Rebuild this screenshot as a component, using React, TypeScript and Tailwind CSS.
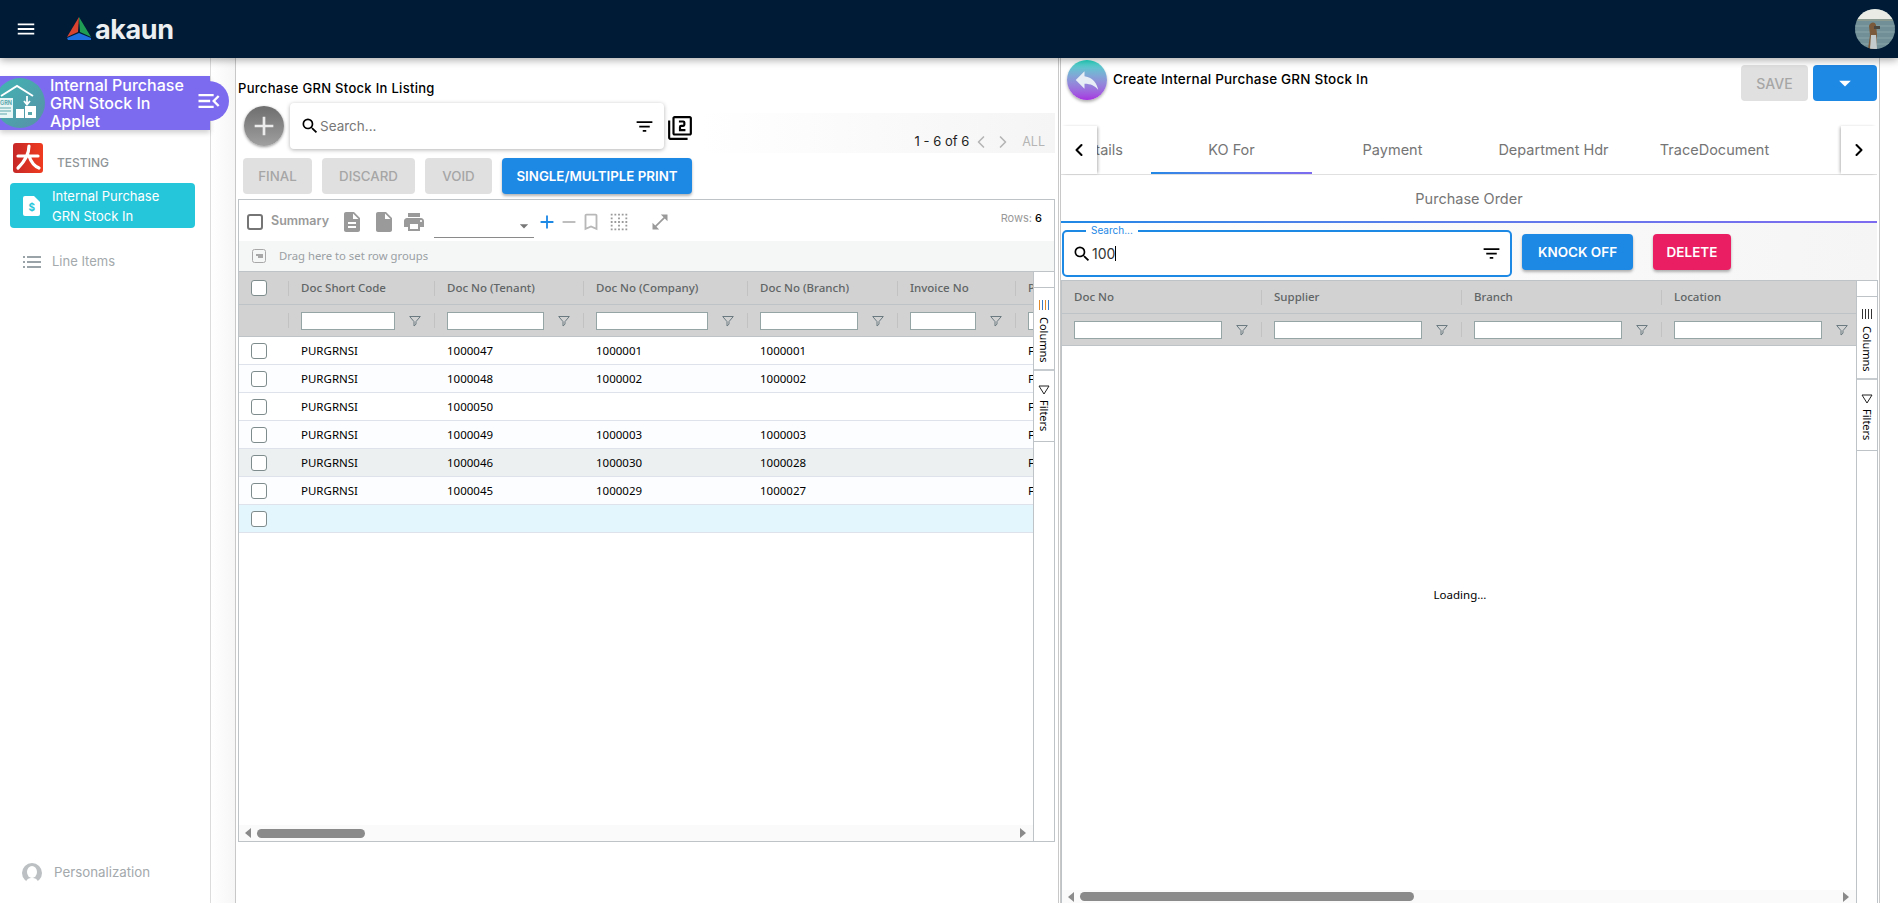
import {
  MdAdd,
  MdArrowDropDown,
  MdBookmarkBorder,
  MdBorderClear,
  MdDescription,
  MdFilter2,
  MdFilterList,
  MdInsertDriveFile,
  MdMenu,
  MdMenuOpen,
  MdOpenInFull,
  MdPrint,
  MdRemove,
  MdReply,
  MdSearch,
} from "react-icons/md";
import { ChevronLeft, ChevronRight } from "lucide-react";

type Column = { title: string; cell: string };

const leftColumns: Column[] = [
  { title: "Doc Short Code", cell: "w-[146px]" },
  { title: "Doc No (Tenant)", cell: "w-[149px]" },
  { title: "Doc No (Company)", cell: "w-[164px]" },
  { title: "Doc No (Branch)", cell: "w-[150px]" },
  { title: "Invoice No", cell: "w-[118px]" },
  { title: "Posting Status", cell: "w-[150px]" },
];

const rightColumns: Column[] = [
  { title: "Doc No", cell: "w-[200px]" },
  { title: "Supplier", cell: "w-[200px]" },
  { title: "Branch", cell: "w-[200px]" },
  { title: "Location", cell: "w-[200px]" },
];

const rows = [
  { values: ["PURGRNSI", "1000047", "1000001", "1000001", "", "FINAL"], bg: "bg-white" },
  { values: ["PURGRNSI", "1000048", "1000002", "1000002", "", "FINAL"], bg: "bg-[#fcfdfe]" },
  { values: ["PURGRNSI", "1000050", "", "", "", "FINAL"], bg: "bg-white" },
  { values: ["PURGRNSI", "1000049", "1000003", "1000003", "", "FINAL"], bg: "bg-[#fcfdfe]" },
  { values: ["PURGRNSI", "1000046", "1000030", "1000028", "", "FINAL"], bg: "bg-[#ecf0f1]" },
  { values: ["PURGRNSI", "1000045", "1000029", "1000027", "", "FINAL"], bg: "bg-[#fcfdfe]" },
  { values: ["", "", "", "", "", ""], bg: "bg-[#e3f5fd]" },
];

function Funnel() {
  return (
    <svg viewBox="0 0 12 12" className="h-3 w-3 shrink-0" fill="none" stroke="#6b7a80" strokeWidth="1">
      <path d="M.7 1.500h10.600L7 6.600v2.600L5 11V6.600z" />
    </svg>
  );
}

function Checkbox({ className = "border-[1.5px] border-[#7f8c8d]" }: { className?: string }) {
  return <span className={`block h-4 w-4 shrink-0 rounded-[3px] bg-white ${className}`} />;
}

function Triangle({ right }: { right?: boolean }) {
  return (
    <svg viewBox="0 0 8 10" className="h-[10px] w-2 shrink-0" fill="#8a8a8a">
      <path d={right ? "M1 0l6 5-6 5z" : "M7 0L1 5l6 5z"} />
    </svg>
  );
}

function SideTabs({ colored }: { colored?: boolean }) {
  return (
    <div className="w-[21px] shrink-0 self-stretch border-l border-[#bdc3c7] bg-white [font-family:'Noto_Sans',sans-serif] text-[11px] text-black">
      <div className="h-4 border-b border-[#bdc3c7]" />
      <div className="flex h-[83px] flex-col items-center border-b-2 border-[#c6cbcf] pt-3">
        <div className="mb-[7px] flex h-[10px] w-[10px] justify-between">
          <span className={`h-full w-px ${colored ? "bg-[#e08a2c]" : "bg-[#333]"}`} />
          <span className={`h-full w-px ${colored ? "bg-[#3a7bc8]" : "bg-[#333]"}`} />
          <span className={`h-full w-px ${colored ? "bg-[#e08a2c]" : "bg-[#333]"}`} />
          <span className={`h-full w-px ${colored ? "bg-[#3a7bc8]" : "bg-[#333]"}`} />
        </div>
        <span className="leading-none [writing-mode:vertical-lr]">Columns</span>
      </div>
      <div className="flex h-[71px] flex-col items-center border-b border-[#bdc3c7] pt-[14px]">
        <svg viewBox="0 0 12 10" className="mb-[5px] h-[10px] w-3" fill="none" stroke="#222" strokeWidth="1">
          <path d="M1 1h10L6 9z" />
        </svg>
        <span className="leading-none [writing-mode:vertical-lr]">Filters</span>
      </div>
    </div>
  );
}

function GridTable({
  columns,
  checkbox,
  thumb,
  scrollBar,
  children,
}: {
  columns: Column[];
  checkbox?: boolean;
  thumb: string;
  scrollBar: string;
  children: React.ReactNode;
}) {
  return (
    <div className="flex min-w-0 flex-1 flex-col overflow-hidden [font-family:'Noto_Sans',sans-serif]">
      <div className="flex h-8 shrink-0 bg-[#d2d2d2] text-[11.500px] font-medium text-[#616566]">
        {checkbox && (
          <div className="flex w-[50px] shrink-0 items-center justify-between pl-3">
            <Checkbox />
            <span className="h-[15px] w-px bg-[#c2c2c2]" />
          </div>
        )}
        {columns.map((c) => (
          <div key={c.title} className={`flex shrink-0 items-center justify-between pl-3 ${c.cell}`}>
            <span className="whitespace-nowrap">{c.title}</span>
            <span className="h-[15px] w-px bg-[#c2c2c2]" />
          </div>
        ))}
      </div>
      <div className="flex h-[33px] shrink-0 border-y border-[#bdc3c7] bg-[#d2d2d2]">
        {checkbox && (
          <div className="flex w-[50px] shrink-0 items-center justify-end">
            <span className="h-[15px] w-px bg-[#c2c2c2]" />
          </div>
        )}
        {columns.map((c) => (
          <div key={c.title} className={`flex shrink-0 items-center pl-3 ${c.cell}`}>
            <span className="mr-[14px] h-[18px] min-w-0 flex-1 border border-[#95a5a6] bg-white" />
            <Funnel />
            <span className="ml-[13px] h-[15px] w-px bg-[#c2c2c2]" />
          </div>
        ))}
      </div>
      <div className="min-h-0 flex-1">{children}</div>
      <div className={`flex shrink-0 items-center bg-[#fafafa] pl-[5px] pr-[6px] ${scrollBar}`}>
        <Triangle />
        <span className={`ml-[5px] h-[9px] rounded-full bg-[#8a8a8a] ${thumb}`} />
        <span className="flex-1" />
        <Triangle right />
      </div>
    </div>
  );
}

function AppletIcon() {
  return (
    <svg viewBox="0 0 50 50" className="h-[50px] w-[50px] shrink-0">
      <defs>
        <linearGradient id="applet" x1="0" y1="0" x2="1" y2="1">
          <stop offset="0" stopColor="#3fb6b2" />
          <stop offset="1" stopColor="#5a8fa8" />
        </linearGradient>
      </defs>
      <circle cx="25" cy="25" r="25" fill="url(#applet)" />
      <path d="M6 18 L22 8 L38 18" fill="none" stroke="#fff" strokeWidth="2" />
      <rect x="3" y="20" width="15" height="20" fill="#e8f6f6" />
      <text x="5" y="27" fontSize="5.500" fontWeight="700" fill="#5aa7ad" fontFamily="Inter">GRN</text>
      <path d="M5 30h11M5 33h11M5 36h7" stroke="#5aa7ad" strokeWidth="1" />
      <path d="M32 18v8m-3-3l3 3.500 3-3.500" fill="none" stroke="#fff" strokeWidth="1.800" />
      <path d="M21 31h8v9h-8zM30 28h11v12H30z" fill="#fff" />
      <path d="M33 34h4v3h-4z" fill="#5aa7ad" />
    </svg>
  );
}

function Avatar() {
  return (
    <svg viewBox="0 0 40 40" className="h-10 w-10 rounded-full">
      <rect width="40" height="40" fill="#708f96" />
      <rect width="40" height="10" fill="#e9ebe4" />
      <rect y="10" width="40" height="2" fill="#8a9a90" />
      <path d="M0 17h40M0 23h40M0 29h40M0 35h40" stroke="#8aa5ab" strokeWidth="1" />
      <path d="M14 17c1-4 6-5 7-1l1 9-1 15h-8l2-14z" fill="#7a5a3a" />
      <path d="M16 26h5l1 14h-7z" fill="#c4cbcc" />
      <path d="M19 17h6v3h-6z" fill="#4a4640" />
    </svg>
  );
}

export default function App() {
  return (
    <div className="flex h-[903px] w-[1898px] flex-col overflow-hidden bg-white [font-family:Inter,sans-serif]">
      <header className="relative z-20 flex h-[58px] shrink-0 items-center bg-[#001b36] pl-[15px] pr-[3px] shadow-[0_2px_8px_rgba(0,0,0,0.35)]">
        <MdMenu className="h-[22px] w-[22px] text-white" />
        <svg viewBox="0 0 26 24" className="ml-[29px] h-6 w-[26px]">
          <path d="M13 0L1 20l11-5z" fill="#d8432f" />
          <path d="M13 0l12 20-11-5z" fill="#1f9d55" />
          <path d="M1 21l12-5 12 5v2H2z" fill="#1f6fe0" />
        </svg>
        <span className="ml-[3px] text-[27px] font-bold leading-none tracking-[-0.4px] text-[#eceff1]">akaun</span>
        <div className="ml-auto">
          <Avatar />
        </div>
      </header>

      <div className="flex min-h-0 flex-1">
        {/* left menu */}
        <aside className="relative z-10 flex w-[211px] shrink-0 flex-col border-r border-[#dcdcdc] pt-[18px]">
          <div className="relative flex h-[54px] w-[210px] items-center bg-[#7d6bef] shadow-[0_3px_5px_rgba(0,0,0,0.18)]">
            <div className="-ml-[5px]">
              <AppletIcon />
            </div>
            <span className="ml-[5px] w-[150px] text-[16px] font-medium leading-[18px] text-white">
              Internal Purchase GRN Stock In Applet
            </span>
            <div className="absolute -right-[19px] top-[5px] flex h-10 w-10 items-center justify-center rounded-full bg-[#7d6bef]">
              <MdMenuOpen className="h-7 w-7 text-white" />
            </div>
          </div>
          <div className="ml-[13px] mt-[13px] flex h-[30px] items-center">
            <svg viewBox="0 0 30 30" className="h-[30px] w-[30px] rounded-[3px]">
              <defs>
                <linearGradient id="redmark" x1="0" y1="0" x2="1" y2="0">
                  <stop offset="0" stopColor="#c62828" />
                  <stop offset="1" stopColor="#ef3b1f" />
                </linearGradient>
              </defs>
              <rect width="30" height="30" fill="url(#redmark)" />
              <path
                d="M16 3C16 10 12 18 5 25M5 13H25M16 13C18 19 21 23 26 25"
                fill="none"
                stroke="#fff"
                strokeWidth="3.200"
                strokeLinecap="round"
              />
            </svg>
            <span className="ml-[14px] mt-[10px] text-[12px] font-medium text-[#8f9598]">TESTING</span>
          </div>
          <div className="ml-[10px] mt-[10px] flex h-[45px] w-[185px] items-center rounded-[4px] bg-[#26c6da] pl-[13px] text-white">
            <svg viewBox="0 0 18 20" className="h-[20px] w-[18px] shrink-0">
              <path d="M2 0h9l6 6v12a2 2 0 0 1-2 2H2a2 2 0 0 1-2-2V2a2 2 0 0 1 2-2z" fill="#fff" />
              <text x="5.500" y="15" fontSize="10" fontWeight="700" fill="#26c6da" fontFamily="Inter">$</text>
            </svg>
            <span className="ml-[11px] w-[125px] text-[13px] leading-[20px]">Internal Purchase GRN Stock In</span>
          </div>
          <div className="ml-[23px] mt-[22px] flex h-6 items-center text-[13px] text-[#a3a9ac]">
            <svg viewBox="0 0 18 12" className="h-3 w-[18px]" fill="#9aa3a8">
              <path d="M0 0h2v2H0zM4 0h14v2H4zM0 5h2v2H0zM4 5h14v2H4zM0 10h2v2H0zM4 10h14v2H4z" />
            </svg>
            <span className="ml-[11px]">Line Items</span>
          </div>
          <div className="ml-[22px] mt-auto mb-[20px] flex h-5 items-center text-[13.300px] text-[#a3a9ac]">
            <svg viewBox="0 0 20 20" className="h-5 w-5">
              <circle cx="10" cy="10" r="10" fill="#bcc0c2" />
              <ellipse cx="10" cy="9" rx="5" ry="6" fill="#fff" />
              <path d="M4 20c0-4 3-5 6-5s6 1 6 5z" fill="#fff" />
            </svg>
            <span className="ml-3">Personalization</span>
          </div>
        </aside>

        <div className="w-6 shrink-0 bg-gradient-to-r from-white to-[#f6f6f6]" />

        {/* listing panel */}
        <section className="flex w-[824px] shrink-0 flex-col border-x border-[#c8c8c8] pr-[3px]">
          <h2 className="ml-[2px] mt-[22px] text-[13px] font-medium leading-4 tracking-[0.3px] text-black">
            Purchase GRN Stock In Listing
          </h2>
          <div className="mt-[7px] flex h-[50px] items-start">
            <button className="ml-2 mt-[3px] flex h-10 w-10 items-center justify-center rounded-full bg-gradient-to-b from-[#6e6e6e] to-[#a0a0a0] shadow-[0_1px_3px_rgba(0,0,0,0.4)]">
              <MdAdd className="h-8 w-8 text-[#ececec]" />
            </button>
            <div className="ml-[6px] flex h-[46px] w-[374px] items-center rounded-[4px] bg-white pl-[10px] pr-[9px] shadow-[0_1px_4px_rgba(0,0,0,0.3)]">
              <MdSearch className="h-5 w-5 text-black" />
              <span className="text-[13.500px] text-[#777]">Search...</span>
              <MdFilterList className="ml-auto h-[21px] w-[21px] text-black" />
            </div>
            <MdFilter2 className="ml-[3px] mt-[12px] h-[26px] w-[26px] text-black" />
            <div className="ml-[8px] mt-[10px] flex h-10 flex-1 items-center justify-end bg-gradient-to-r from-white to-[#f5f5f5] pr-[10px] pt-[18px]">
              <span className="text-[13px] text-[#222]">1 - 6 of 6</span>
              <ChevronLeft className="ml-[2px] h-5 w-5 text-[#b5b5b5]" strokeWidth={2} />
              <ChevronRight className="ml-[2px] h-5 w-5 text-[#b5b5b5]" strokeWidth={2} />
              <span className="ml-[9px] text-[12.500px] text-[#b5b5b5]">ALL</span>
            </div>
          </div>
          <div className="mt-[5px] flex h-9 gap-[10px] pl-[7px] text-[13.300px] font-medium">
            <button className="w-[69px] rounded-[4px] bg-[#e0e0e0] pt-px text-[#a6a6a6]">FINAL</button>
            <button className="w-[93px] rounded-[4px] bg-[#e0e0e0] pt-px text-[#a6a6a6]">DISCARD</button>
            <button className="w-[67px] rounded-[4px] bg-[#e0e0e0] pt-px text-[#a6a6a6]">VOID</button>
            <button className="w-[190px] rounded-[4px] bg-[#1e88e5] pt-px font-semibold text-white shadow-[0_2px_3px_rgba(0,0,0,0.3)]">
              SINGLE/MULTIPLE PRINT
            </button>
          </div>

          <div className="ml-[2px] mt-[5px] flex h-[643px] w-[817px] flex-col border border-[#bdc3c7]">
            <div className="flex h-[41px] shrink-0 items-center pl-2 pr-3 pt-[2px] text-[#9a9a9a]">
              <Checkbox className="border-2 border-[#757575]" />
              <span className="ml-2 text-[12.500px] font-semibold">Summary</span>
              <MdDescription className="ml-[11px] h-6 w-6" />
              <MdInsertDriveFile className="ml-2 h-6 w-6" />
              <MdPrint className="ml-[6px] h-6 w-6" />
              <div className="mb-[3px] ml-2 flex h-[24px] w-[100px] items-center justify-end self-end border-b border-[#8a8a8a]">
                <MdArrowDropDown className="h-5 w-5 text-[#777]" />
              </div>
              <MdAdd className="ml-[2px] h-[22px] w-[22px] text-[#1e88e5]" />
              <MdRemove className="h-[22px] w-[22px] text-[#b8b8b8]" />
              <MdBookmarkBorder className="h-[22px] w-[22px] text-[#b8b8b8]" />
              <MdBorderClear className="ml-[6px] h-[22px] w-[22px]" />
              <MdOpenInFull className="ml-[20px] h-5 w-5" />
              <span className="mb-[6px] ml-auto text-[11px] text-[#999]">
                Rows: <span className="font-medium text-black">6</span>
              </span>
            </div>
            <div className="flex h-[31px] shrink-0 items-center border-b border-[#bdc3c7] bg-[#f5f7f7] pl-[13px] [font-family:'Noto_Sans',sans-serif] text-[11.300px] text-[#9aa0a3]">
              <svg viewBox="0 0 14 14" className="h-[14px] w-[14px]" fill="none" stroke="#a8a8a8">
                <rect x=".5" y=".5" width="13" height="13" rx="2" />
                <path d="M4 5h7v4H6V7H4z" fill="#a8a8a8" stroke="none" />
              </svg>
              <span className="ml-[13px]">Drag here to set row groups</span>
            </div>
            <div className="flex min-h-0 flex-1">
              <GridTable columns={leftColumns} checkbox thumb="w-[108px]" scrollBar="h-4">
                {rows.map((row, i) => (
                  <div key={i} className={`flex h-7 items-center border-b border-[#dde2eb] text-[11.500px] text-black ${row.bg}`}>
                    <div className="w-[50px] shrink-0 pl-3">
                      <Checkbox />
                    </div>
                    {leftColumns.map((c, j) => (
                      <div key={c.title} className={`shrink-0 pl-3 ${c.cell}`}>
                        {row.values[j]}
                      </div>
                    ))}
                  </div>
                ))}
              </GridTable>
              <SideTabs colored />
            </div>
          </div>
        </section>

        {/* create panel */}
        <section className="ml-px flex w-[820px] shrink-0 flex-col border-x border-[#c8c8c8]">
          <div className="flex h-[68px] shrink-0 items-start pr-[2px]">
            <button className="ml-[6px] mt-[2px] flex h-10 w-10 items-center justify-center rounded-full bg-gradient-to-b from-[#17dfc9] to-[#a531e0] shadow-[0_2px_3px_rgba(0,0,0,0.3)]">
              <MdReply className="h-[30px] w-[30px] text-[#e8eef5]" />
            </button>
            <span className="ml-[6px] mt-[13px] text-[13.500px] font-medium leading-4 tracking-[0.2px] text-black">
              Create Internal Purchase GRN Stock In
            </span>
            <button className="ml-auto mt-[7px] h-9 w-[67px] rounded-[4px] bg-[#e0e0e0] text-[14px] font-medium text-[#a6a6a6]">
              SAVE
            </button>
            <button className="ml-[5px] mt-[7px] flex h-9 w-[64px] items-center justify-center rounded-[4px] bg-[#1e88e5]">
              <MdArrowDropDown className="h-7 w-7 text-white" />
            </button>
          </div>

          <div className="flex h-[49px] w-[816px] shrink-0 border-b border-[#e0e0e0] text-[14.500px] text-[#757575]">
            <div className="z-10 flex w-[36px] shrink-0 items-center justify-center bg-white shadow-[2px_0_3px_-1px_rgba(0,0,0,0.3)]">
              <ChevronLeft className="h-5 w-5 text-black" strokeWidth={2.500} />
            </div>
            <div className="flex min-w-0 flex-1 overflow-hidden">
              <div className="flex">
                <div className="-ml-[54px] flex h-[48px] w-[108px] shrink-0 items-center justify-end pr-[28px]">Details</div>
                {["KO For", "Payment", "Department Hdr", "TraceDocument"].map((tab) => (
                  <div key={tab} className="relative flex h-[48px] w-[161px] shrink-0 items-center justify-center">
                    {tab}
                    {tab === "KO For" && (
                      <span className="absolute inset-x-0 bottom-0 h-[2px] bg-gradient-to-r from-[#1e88e5] to-[#7d6bef]" />
                    )}
                  </div>
                ))}
              </div>
            </div>
            <div className="z-10 flex w-[36px] shrink-0 items-center justify-center bg-white shadow-[-2px_0_3px_-1px_rgba(0,0,0,0.3)]">
              <ChevronRight className="h-5 w-5 text-black" strokeWidth={2.500} />
            </div>
          </div>

          <div className="flex h-[46px] w-[816px] shrink-0 items-center justify-center pt-[2px] text-[14.500px] text-[#757575]">
            Purchase Order
          </div>
          <div className="h-[2px] w-[816px] shrink-0 bg-gradient-to-r from-[#1e88e5] to-[#7d6bef]" />

          <div className="flex h-[57px] w-[816px] shrink-0 items-start bg-gradient-to-r from-white to-[#f5f5f5]">
            <div className="relative ml-px mt-[7px] flex h-[47px] w-[450px] items-center rounded-[5px] border-2 border-[#1e88e5] bg-white pl-2 pr-[8px]">
              <span className="absolute -top-[8px] left-[22px] bg-white px-[5px] text-[10px] leading-3 text-[#1e88e5]">
                Search...
              </span>
              <MdSearch className="h-5 w-5 text-black" />
              <span className="text-[14px] text-[#333]">100</span>
              <span className="h-[15px] w-px bg-black" />
              <MdFilterList className="ml-auto h-[21px] w-[21px] text-black" />
            </div>
            <button className="ml-[10px] mt-[11px] h-9 w-[111px] rounded-[4px] bg-[#1e88e5] text-[13.500px] font-semibold text-white shadow-[0_2px_3px_rgba(0,0,0,0.3)]">
              KNOCK OFF
            </button>
            <button className="ml-[20px] mt-[11px] h-9 w-[78px] rounded-[4px] bg-[#e91e63] text-[13.500px] font-semibold text-white shadow-[0_2px_3px_rgba(0,0,0,0.3)]">
              DELETE
            </button>
          </div>

          <div className="flex min-h-0 w-[817px] flex-1 border-x border-t border-[#bdc3c7]">
            <GridTable columns={rightColumns} thumb="w-[334px]" scrollBar="h-[13px]">
              <div className="flex h-full items-center justify-center pb-[46px] pl-[2px] text-[11.500px] text-black">
                Loading...
              </div>
            </GridTable>
            <SideTabs />
          </div>
        </section>
      </div>
    </div>
  );
}
